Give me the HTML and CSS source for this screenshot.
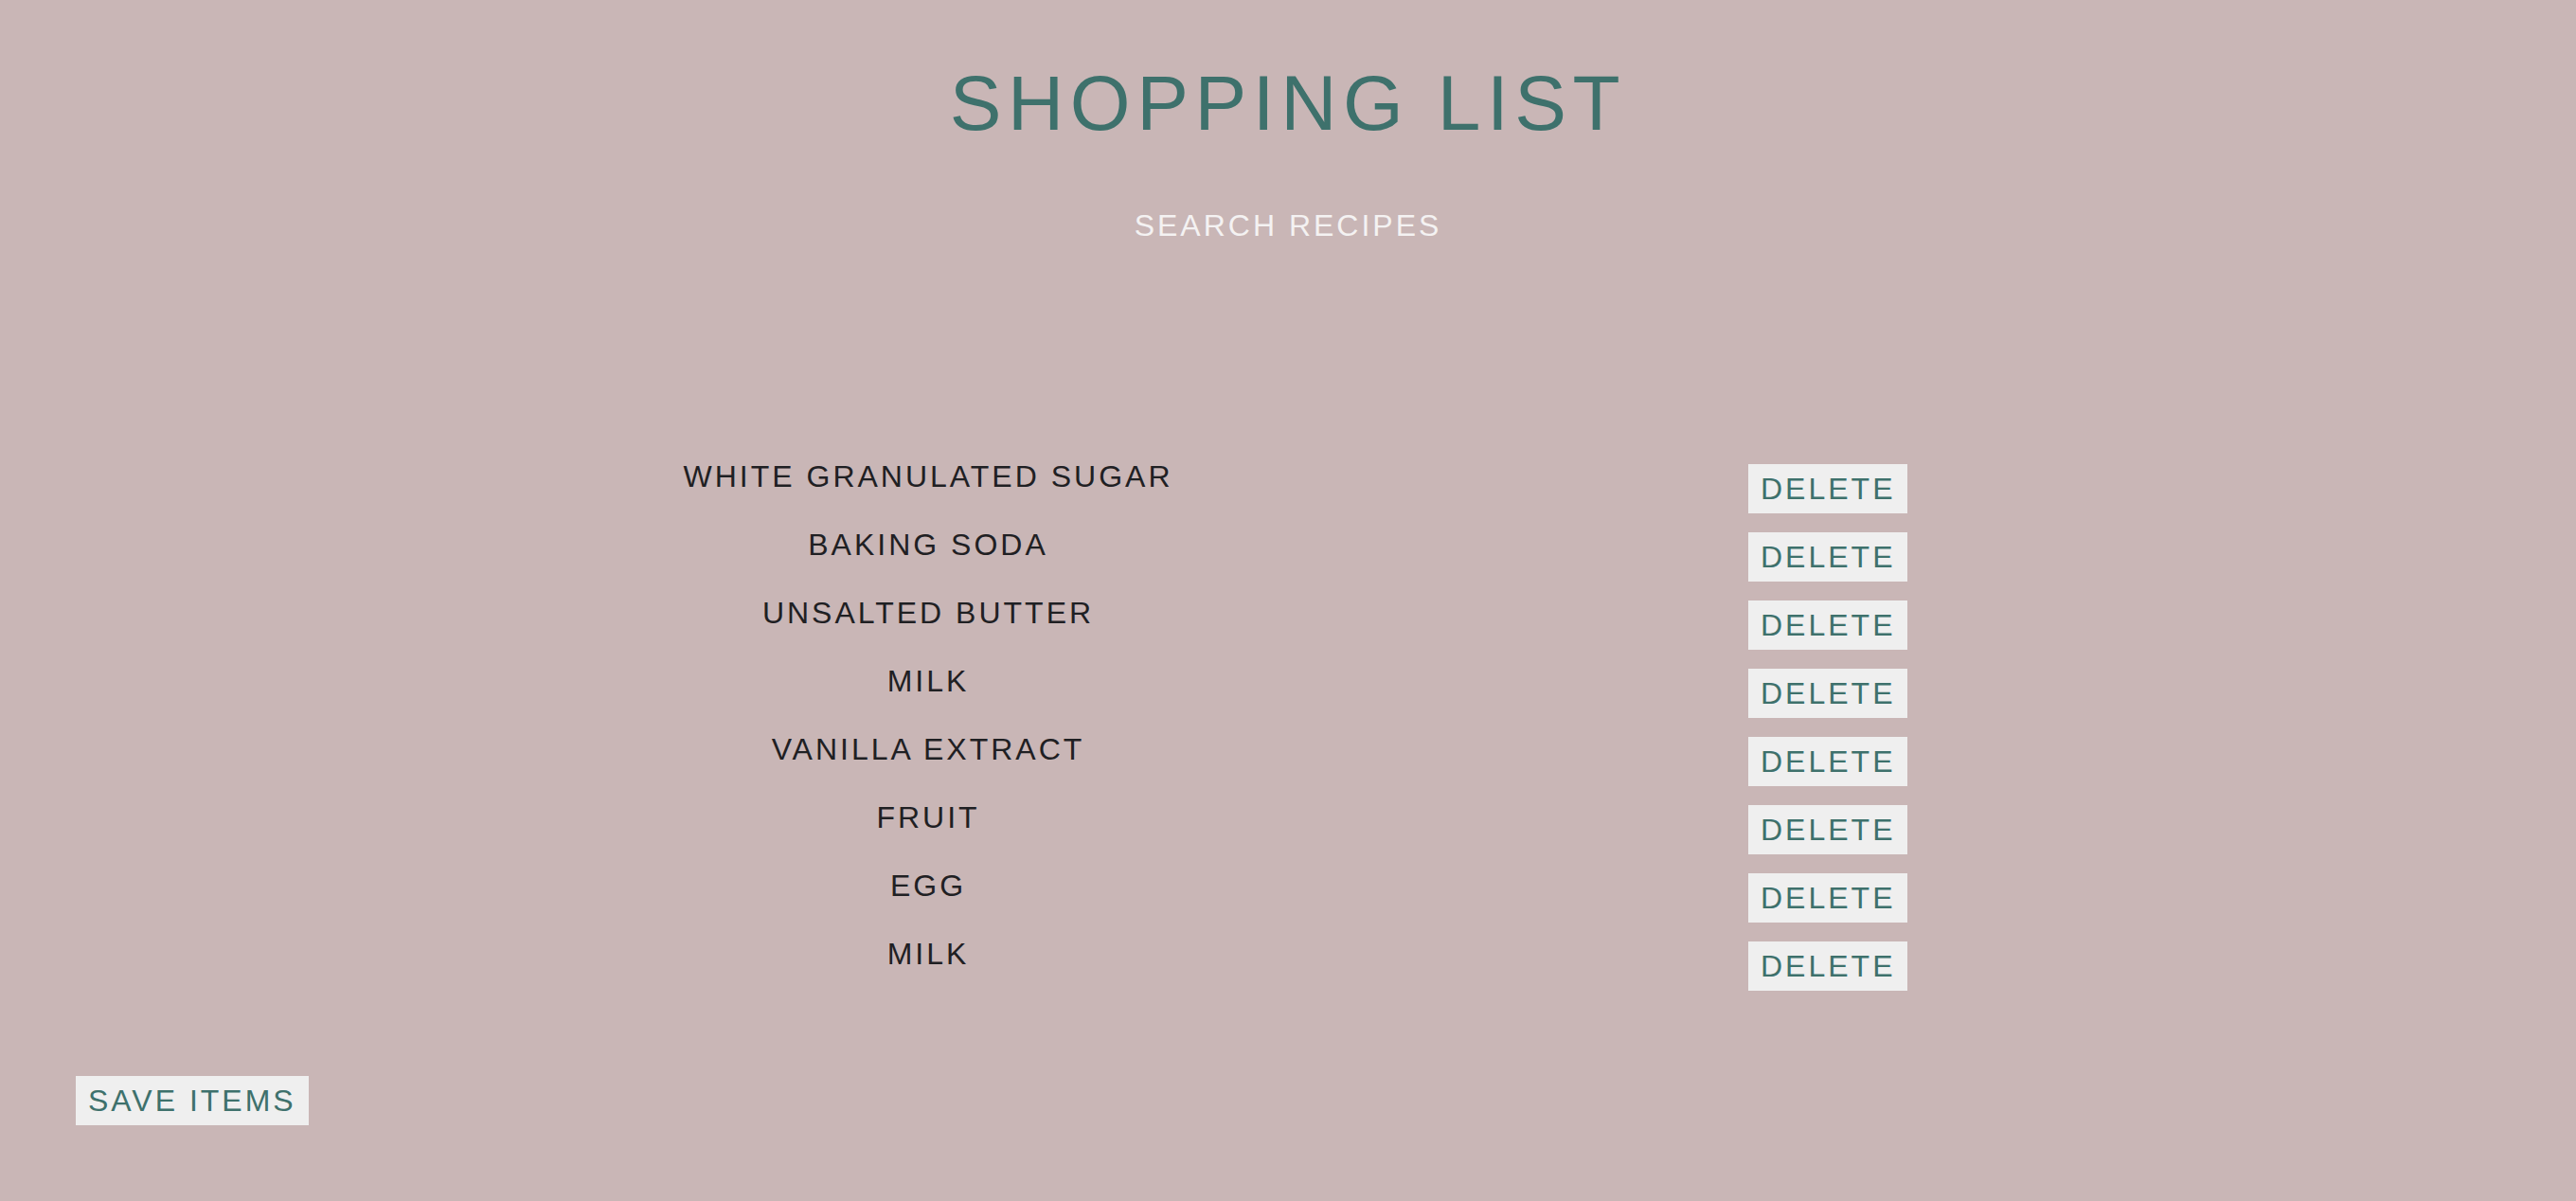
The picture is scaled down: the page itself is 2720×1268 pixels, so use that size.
FILE: index.html
```html
<!DOCTYPE html>
<html>
<head>
<meta charset="utf-8">
<title>Shopping List</title>
<link rel="stylesheet" href="styles.css">
</head>
<body>
<main class="page">
  <h1 class="title">SHOPPING LIST</h1>
  <div class="search">SEARCH RECIPES</div>
  <div class="list">
    <div class="item">WHITE GRANULATED SUGAR</div><button class="btn delete">DELETE</button>
    <div class="item">BAKING SODA</div><button class="btn delete">DELETE</button>
    <div class="item">UNSALTED BUTTER</div><button class="btn delete">DELETE</button>
    <div class="item">MILK</div><button class="btn delete">DELETE</button>
    <div class="item">VANILLA EXTRACT</div><button class="btn delete">DELETE</button>
    <div class="item">FRUIT</div><button class="btn delete">DELETE</button>
    <div class="item">EGG</div><button class="btn delete">DELETE</button>
    <div class="item">MILK</div><button class="btn delete">DELETE</button>
  </div>
  <button class="btn save">SAVE ITEMS</button>
</main>
</body>
</html>
```

FILE: styles.css
```css
html, body {
  margin: 0;
  padding: 0;
}
body {
  background: #c9b6b6;
  font-family: "Liberation Sans", Arial, sans-serif;
  width: 2720px;
  height: 1268px;
  overflow: hidden;
}
.page {
  padding-top: 62px;
}
.title {
  margin: 0;
  text-align: center;
  font-size: 82px;
  font-weight: 400;
  line-height: 94px;
  letter-spacing: 6.6px;
  color: #3e716c;
}
.search {
  margin-top: 64px;
  text-align: center;
  font-size: 32px;
  line-height: 37px;
  letter-spacing: 3px;
  color: #f4f2f2;
}
.list {
  margin-top: 228px;
  margin-left: 680px;
  display: grid;
  grid-template-columns: 600px 168px;
  column-gap: 566px;
  row-gap: 15px;
  align-items: start;
}
.item {
  text-align: center;
  font-size: 32px;
  line-height: 37px;
  letter-spacing: 3px;
  color: #1f2023;
}
.btn {
  border: none;
  background: #efefef;
  color: #3e716c;
  font-family: "Liberation Sans", Arial, sans-serif;
  font-size: 32px;
  line-height: 37px;
  letter-spacing: 3px;
  height: 52px;
  padding: 0 13px;
  text-align: left;
  cursor: pointer;
}
.delete {
  margin-top: 5px;
  width: 168px;
}
.save {
  display: block;
  margin-top: 90px;
  margin-left: 80px;
  width: 246px;
}
```
